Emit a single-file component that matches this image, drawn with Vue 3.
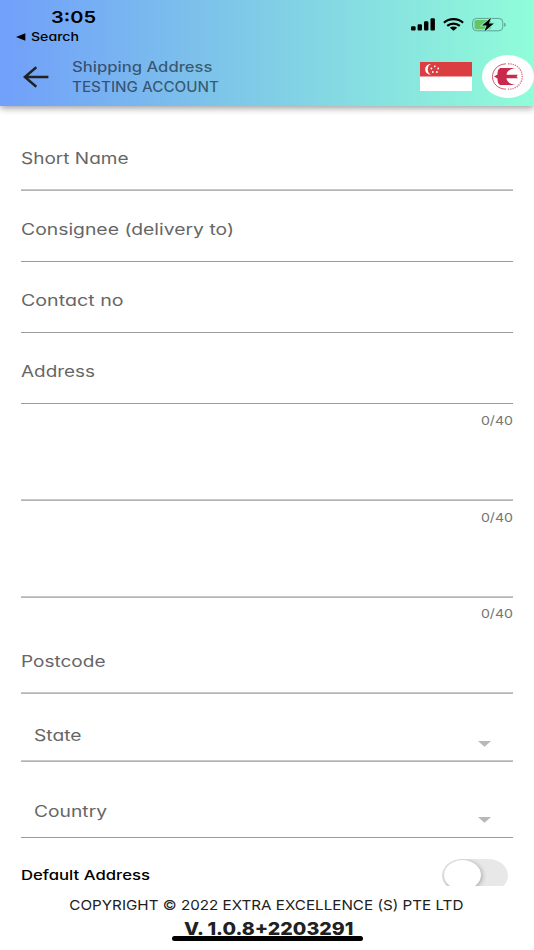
<template>
  <div class="screen">
    <header class="app-header">
      <div class="status-bar">
        <div class="status-left">
          <div class="time"><span v-fit="45">3:05</span></div>
          <div class="back-to">
            <svg width="10" height="8" viewBox="0 0 10 8"><path d="M0 4 9.3.2v7.6z" /></svg>
            <span v-fit="48">Search</span>
          </div>
        </div>
        <div class="status-icons">
          <svg class="signal" width="25" height="13" viewBox="0 0 25 13">
            <rect x="0" y="8.3" width="4.6" height="4.2" rx="1.2" />
            <rect x="6.6" y="6.2" width="4.4" height="6.3" rx="1.2" />
            <rect x="13" y="3.3" width="4.4" height="9.2" rx="1.2" />
            <rect x="19.5" y="0.2" width="4.4" height="12.3" rx="1.2" />
          </svg>
          <svg class="wifi" width="21" height="13" viewBox="0 0 21 13">
            <g fill="none" stroke="#000" stroke-width="2.2">
              <path d="M.9 4.7C6.2-.1 14.8-.1 20.1 4.7" />
              <path d="M4.2 7.8c3.5-3 9.1-3 12.6 0" />
            </g>
            <path d="M10.5 12.7 6.8 9.8c2.1-1.7 5.3-1.7 7.4 0z" />
          </svg>
          <svg class="battery" width="35" height="15" viewBox="0 0 35 15">
            <rect x=".6" y="1.4" width="30.2" height="12.4" rx="4" fill="none" stroke="#5da195" stroke-width="1" />
            <path d="M32.2 5.7c2 .5 2 3.5 0 4z" fill="#5da195" />
            <rect x="2.5" y="3" width="16.5" height="9.2" rx="2" fill="#65c466" />
            <path d="M19 .8 10 8.500h4.700L12.300 14.400 21.800 6.600H17z" stroke="#8aecd9" stroke-width="1.6" paint-order="stroke" />
          </svg>
        </div>
      </div>
      <div class="toolbar">
        <svg class="back" width="26" height="22" viewBox="0 0 26 22">
          <path d="M13.300 1.200 1.800 11l11.500 9.800M2 11h23.400" fill="none" stroke="#222" stroke-width="2.5" />
        </svg>
        <div class="titles">
          <div><span v-fit="140.5">Shipping Address</span></div>
          <div><span v-fit="147">TESTING ACCOUNT</span></div>
        </div>
        <svg class="flag" width="52" height="29" viewBox="0 0 52 29">
          <path fill="#fff" d="M0 0h52v29H0z" />
          <path fill="#db3e41" d="M0 0h52v14.500H0z" />
          <path fill="#fff" d="M11 2C3.300 2 3.300 12.600 11 12.600 6.700 11 6.700 3.600 11 2z" />
          <g fill="#fff">
            <circle cx="14.8" cy="4.3" r=".9" />
            <circle cx="11.4" cy="6.5" r=".9" />
            <circle cx="18.2" cy="6.5" r=".9" />
            <circle cx="12.8" cy="10" r=".9" />
            <circle cx="16.9" cy="10" r=".9" />
          </g>
        </svg>
        <svg class="logo" width="52" height="43" viewBox="0 0 52 43">
          <ellipse cx="26" cy="21.5" rx="26" ry="21.5" fill="#fff" />
          <g fill="none" stroke="#c9294a">
            <path d="M24 8.800C6 10 6 33.500 24 34.200" stroke-width=".8" />
            <path d="M26 8.800C45 8.800 45 34.200 26 34.200" stroke-width="1.400" stroke-dasharray="1.300 1" opacity=".65" />
          </g>
          <path
            fill="#c9294a"
            d="M12 21.500 15.500 19.600C15.500 15.500 16.500 13 19.500 13H33.500C28 14 24.800 16.300 24.500 19.700H36L34.500 21.500 36 23.300H24.500C24.800 26.700 28 29.300 33.500 30H19.500C16.500 30 15.500 27.500 15.500 23.400z"
          />
        </svg>
      </div>
    </header>

    <main class="form">
      <div v-for="field in fields" :key="field.label" class="field">
        <span v-fit="field.width" class="label">{{ field.label }}</span>
      </div>
      <div v-for="n in 2" :key="n" class="field extra">
        <span v-fit.right="32" class="counter">0/40</span>
      </div>
      <div class="field postcode">
        <span v-fit.right="32" class="counter">0/40</span>
        <span v-fit="84.5" class="label">Postcode</span>
      </div>
      <div v-for="item in selects" :key="item.label" class="field select" :class="item.name">
        <span v-fit="item.width" class="label">{{ item.label }}</span>
        <svg class="caret" width="13" height="6" viewBox="0 0 13 6"><path d="M0 0h13L6.500 5.700z" fill="#b8b8b8" /></svg>
      </div>
      <div class="default-row">
        <span v-fit="129">Default Address</span>
        <div class="toggle"><div class="thumb"></div></div>
      </div>
    </main>

    <footer class="footer">
      <div class="copyright"><span v-fit.center="394">COPYRIGHT © 2022 EXTRA EXCELLENCE (S) PTE LTD</span></div>
      <div class="version"><span v-fit.center="169.5">V. 1.0.8+2203291</span></div>
      <div class="home-bar"></div>
    </footer>
  </div>
</template>

<script setup>
const fields = [
  { label: 'Short Name', width: 107.5 },
  { label: 'Consignee (delivery to)', width: 213 },
  { label: 'Contact no', width: 102.5 },
  { label: 'Address', width: 74 }
]

const selects = [
  { label: 'State', name: 'state', width: 47.5 },
  { label: 'Country', name: 'country', width: 73 }
]

// widens a text to the given width in pixels
const vFit = {
  mounted(el, { value, modifiers }) {
    el.style.transformOrigin = modifiers.right ? 'right' : modifiers.center ? 'center' : 'left'
    el.style.transform = `scaleX(${value / el.getBoundingClientRect().width})`
  }
}
</script>

<style>
body {
  margin: 0;
  background: #fff;
}
</style>

<style scoped>
.screen {
  width: 534px;
  height: 950px;
  display: flex;
  flex-direction: column;
  overflow: hidden;
  background: #fff;
  font-family: Inter, 'Open Sans', sans-serif;
  font-feature-settings: 'cv11';
}

.screen span {
  display: inline-block;
  white-space: nowrap;
}

.app-header {
  flex: none;
  height: 106px;
  background: linear-gradient(90deg, #719ffa, #80cde6 50%, #90fdd8);
  box-shadow: 0 2px 7px rgba(0, 0, 0, 0.4);
}

.status-bar {
  height: 46px;
  display: flex;
  justify-content: space-between;
}

.time {
  padding: 7px 0 0 51px;
  font-size: 16.5px;
  line-height: 20px;
  font-weight: 600;
}

.back-to {
  display: flex;
  align-items: center;
  gap: 4.5px;
  margin-top: 3px;
  padding-left: 16px;
  font-size: 12px;
  line-height: 14px;
  font-weight: 500;
}

.status-icons {
  display: flex;
  align-items: flex-start;
  padding: 17px 27px 0 0;
}

.signal {
  margin: 0.5px 7px 0 0;
}

.wifi {
  margin: 0.5px 8px 0 0;
}

.battery {
  margin-top: -0.5px;
}

.toolbar {
  height: 60px;
  display: flex;
  align-items: center;
}

.back {
  margin: 1px 0 0 23px;
}

.titles {
  flex: 1;
  margin-left: 22.5px;
  padding-top: 2px;
  font-size: 14px;
  line-height: 20px;
  font-weight: 450;
  color: rgba(0, 0, 0, 0.54);
}

.flag {
  margin-right: 10px;
}

.form {
  flex: none;
  height: 780px;
  padding: 14px 21px 0;
  box-sizing: border-box;
  overflow: hidden;
}

.field {
  height: 71px;
  box-sizing: border-box;
  display: flex;
  align-items: flex-end;
  position: relative;
  padding-bottom: 21px;
  border-bottom: 1px solid #9b9b9b;
}

/* these underlines fall between two pixel rows */
.field:first-child,
.extra,
.postcode,
.state {
  border-bottom-color: #b4b4b4;
  box-shadow: inset 0 -1px #c8c8c8;
}

.label {
  font-size: 15.5px;
  line-height: 20px;
  color: #666;
}

.extra {
  height: 97px;
  align-items: flex-start;
  justify-content: flex-end;
}

.counter {
  padding-top: 8px;
  font-size: 12.3px;
  line-height: 17px;
  color: #757575;
}

.postcode {
  height: 96px;
  flex-direction: column;
  justify-content: space-between;
}

.postcode .counter {
  padding-top: 7px;
}

.postcode .label {
  align-self: flex-start;
}

.select {
  height: 68px;
  justify-content: space-between;
  padding: 0 22px 15px 12.5px;
}

.country {
  height: 76px;
}

.caret {
  margin-bottom: -1px;
}

.default-row {
  height: 33px;
  margin-top: 20.5px;
  padding-right: 5px;
  display: flex;
  align-items: center;
  justify-content: space-between;
  font-size: 13.5px;
  font-weight: 500;
  color: #000;
}

.default-row span {
  padding-bottom: 1px;
}

.toggle {
  width: 66px;
  height: 33px;
  border-radius: 20px / 16.5px;
  background: #e8e8e8;
  overflow: hidden;
}

.thumb {
  width: 37px;
  height: 30px;
  margin: 1.5px;
  border-radius: 50%;
  background: #fff;
  box-shadow: 1px 1px 5px rgba(0, 0, 0, 0.3);
}

.footer {
  flex: 1;
  display: flex;
  flex-direction: column;
  align-items: center;
  background: #fff;
  color: #212121;
}

.copyright {
  margin-top: 9px;
  padding-right: 1px;
  font-size: 13.7px;
  line-height: 20px;
}

.version {
  margin-top: 3px;
  padding-left: 4px;
  font-size: 17.5px;
  line-height: 21px;
  font-weight: 800;
}

.home-bar {
  width: 191px;
  height: 5px;
  margin-top: -3px;
  border-radius: 3px;
  background: #000;
  position: relative;
}
</style>
